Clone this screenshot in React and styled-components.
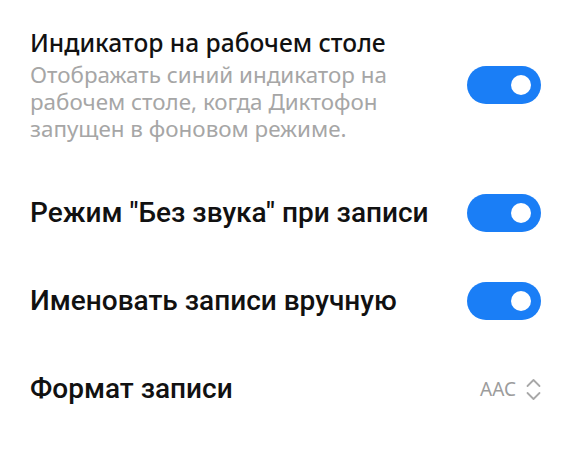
import React, { useState } from "react"
import styled, { createGlobalStyle } from "styled-components"

const GlobalStyle = createGlobalStyle`
  body {
    margin: 0;
    background: #ffffff;
    font-family: Roboto, "Noto Sans", sans-serif;
  }
`

const List = styled.div`
  display: flex;
  flex-direction: column;
  padding: 0 24px 0 30px;
`

const Row = styled.div`
  display: flex;
  align-items: center;
  justify-content: space-between;
  min-height: ${(p) => (p.tall ? "169px" : "88px")};
  gap: 20px;
`

const Texts = styled.div`
  display: flex;
  flex-direction: column;
`

const Title = styled.div`
  font-size: 28px;
  font-weight: 500;
  color: #111111;
  line-height: 34px;
`

// the first block uses the system's rounder face
const MainTitle = styled(Title)`
  font-family: "Noto Sans", Roboto, sans-serif;
  font-size: 24.6px;
  line-height: 32px;
`

const Description = styled.div`
  margin-top: 2px;
  font-family: "Noto Sans", Roboto, sans-serif;
  font-size: 22.4px;
  font-weight: 400;
  color: #a6a6a6;
  line-height: 27px;
  max-width: 400px;
`

const Track = styled.button`
  flex: none;
  width: 74px;
  height: 38px;
  border: none;
  border-radius: 19px;
  padding: 0;
  margin-right: 1px;
  background: ${(p) => (p.on ? "#1a7ef6" : "#d6d6d6")};
  display: flex;
  align-items: center;
  justify-content: ${(p) => (p.on ? "flex-end" : "flex-start")};
  cursor: pointer;
`

const Knob = styled.span`
  width: 20px;
  height: 20px;
  border-radius: 50%;
  background: #ffffff;
  margin: 0 10px;
`

const Value = styled.div`
  display: flex;
  align-items: center;
  gap: 10px;
  font-family: "Noto Sans", Roboto, sans-serif;
  font-size: 19px;
  color: #9c9c9c;
  margin-right: 1px;
`

const Toggle = ({ initial = true }) => {
  const [on, setOn] = useState(initial)
  return (
    <Track on={on ? 1 : 0} onClick={() => setOn(!on)}>
      <Knob />
    </Track>
  )
}

const UpDown = () => (
  <svg width="15" height="23" viewBox="0 0 15 23" fill="none">
    <path
      d="M1.5 8 L7.5 2 L13.5 8 M1.5 15 L7.5 21 L13.5 15"
      stroke="#a8a8a8"
      strokeWidth="1.8"
      strokeLinecap="round"
      strokeLinejoin="round"
    />
  </svg>
)

const App = () => {
  return (
    <>
      <GlobalStyle />
      <List>
        <Row tall={1}>
          <Texts>
            <MainTitle>Индикатор на рабочем столе</MainTitle>
            <Description>
              Отображать синий индикатор на рабочем столе, когда Диктофон
              запущен в фоновом режиме.
            </Description>
          </Texts>
          <Toggle />
        </Row>
        <Row>
          <Title>Режим "Без звука" при записи</Title>
          <Toggle />
        </Row>
        <Row>
          <Title>Именовать записи вручную</Title>
          <Toggle />
        </Row>
        <Row>
          <Title>Формат записи</Title>
          <Value>
            AAC
            <UpDown />
          </Value>
        </Row>
      </List>
    </>
  )
}

export default App
